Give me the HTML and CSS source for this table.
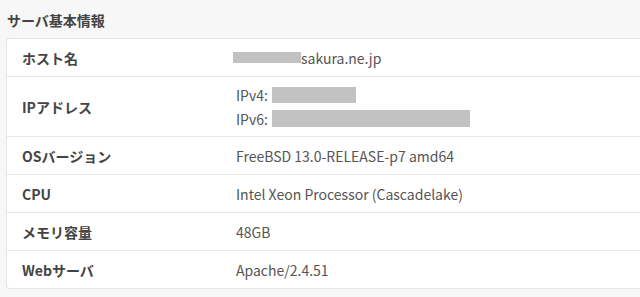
FILE: index.html
```html
<!DOCTYPE html>
<html lang="ja">
<head>
<meta charset="utf-8">
<title>サーバ基本情報</title>
<link rel="stylesheet" href="styles.css">
</head>
<body>
<section class="panel">
  <h2 class="panel-title">サーバ基本情報</h2>
  <div class="info-card">
    <div class="info-row">
      <div class="info-label">ホスト名</div>
      <div class="info-value"><span class="mask mask-host"></span>sakura.ne.jp</div>
    </div>
    <div class="info-row info-row-tall">
      <div class="info-label">IPアドレス</div>
      <div class="info-value">
        <div class="ip-line">IPv4: <span class="mask mask-v4"></span></div>
        <div class="ip-line">IPv6: <span class="mask mask-v6"></span></div>
      </div>
    </div>
    <div class="info-row">
      <div class="info-label">OSバージョン</div>
      <div class="info-value">FreeBSD 13.0-RELEASE-p7 amd64</div>
    </div>
    <div class="info-row">
      <div class="info-label">CPU</div>
      <div class="info-value">Intel Xeon Processor (Cascadelake)</div>
    </div>
    <div class="info-row">
      <div class="info-label">メモリ容量</div>
      <div class="info-value">48GB</div>
    </div>
    <div class="info-row">
      <div class="info-label">Webサーバ</div>
      <div class="info-value">Apache/2.4.51</div>
    </div>
  </div>
</section>
</body>
</html>
```

FILE: styles.css
```css
html, body {
  margin: 0;
  padding: 0;
  background: #f7f7f7;
}

body {
  font-family: "Noto Sans CJK JP", "Noto Sans", sans-serif;
  color: #555;
  font-size: 14px;
}

.panel {
  padding: 11px 0 0 6px;
}

.panel-title {
  margin: 0 0 8px 1px;
  font-size: 14px;
  font-weight: 700;
  line-height: 19px;
  color: #444;
}

.info-card {
  background: #fff;
  border: 1px solid #e6e6e6;
  border-right: 0;
  border-radius: 4px 0 0 4px;
}

.info-row {
  display: flex;
  align-items: center;
  height: 37px;
  border-top: 1px solid #e6e6e6;
}

.info-row:first-child {
  border-top: 0;
}

.info-row-tall {
  height: 59px;
}

.info-label {
  width: 214px;
  padding-left: 15px;
  font-weight: 700;
  color: #444;
}

.info-value {
  color: #555;
  display: flex;
  align-items: center;
}

.info-row-tall .info-value {
  flex-direction: column;
  align-items: flex-start;
  gap: 6px;
}

.ip-line {
  display: flex;
  align-items: center;
  gap: 4px;
  line-height: 18px;
}

.mask {
  display: inline-block;
  background: #c2c2c2;
}

.mask-host {
  width: 68px;
  height: 11px;
  margin-left: -3px;
}

.mask-v4 {
  width: 84px;
  height: 16px;
}

.mask-v6 {
  width: 198px;
  height: 17px;
}
```
